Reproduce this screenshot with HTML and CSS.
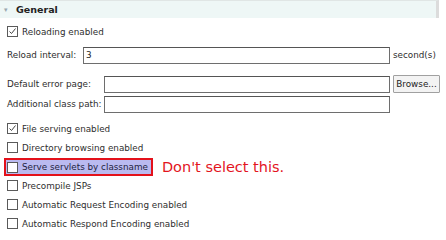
FILE: index.html
```html
<!DOCTYPE html>
<html>
<head>
    <title>General</title>
    <link rel="stylesheet" href="styles.css">
</head>
<body>
    <div class="section">
        <div class="section-head"><span class="twisty">&#9662;</span>General</div>

        <div class="section-body">
            <div class="check first">
                <span class="box"><svg viewBox="0 0 9 9" width="9" height="9"><polyline points="1.5,4.5 3.5,6.5 7.5,1.5" fill="none" stroke="#444" stroke-width="1"/></svg></span>
                Reloading enabled
            </div>

            <div class="row interval">
                <span class="lbl">Reload interval:</span>
                <input class="text" type="text" value="3">
                <span class="unit">second(s)</span>
            </div>

            <div class="paths">
                <span class="lbl">Default error page:</span>
                <input class="text" type="text">
                <button class="browse">Browse...</button>

                <span class="lbl">Additional class path:</span>
                <input class="text" type="text">
                <span></span>
            </div>

            <div class="check gap">
                <span class="box"><svg viewBox="0 0 9 9" width="9" height="9"><polyline points="1.5,4.5 3.5,6.5 7.5,1.5" fill="none" stroke="#444" stroke-width="1"/></svg></span>
                File serving enabled
            </div>
            <div class="check">
                <span class="box"></span>
                Directory browsing enabled
            </div>
            <div class="check marked">
                <span class="hl">
                    <span class="box"></span>
                    Serve servlets by classname
                </span>
                <span class="warn">Don't select this.</span>
            </div>
            <div class="check">
                <span class="box"></span>
                Precompile JSPs
            </div>
            <div class="check">
                <span class="box"></span>
                Automatic Request Encoding enabled
            </div>
            <div class="check">
                <span class="box"></span>
                Automatic Respond Encoding enabled
            </div>
        </div>
    </div>
</body>
</html>
```

FILE: styles.css
```css
body {
    margin: 0;
    width: 446px;
    height: 240px;
    overflow: hidden;
    background: #fff;
    color: #2e2e2e;
    font-family: "DejaVu Sans", sans-serif;
    font-size: 8.8px;
}
.section-head {
    width: 439px;
    height: 18px;
    box-sizing: border-box;
    display: flex;
    align-items: center;
    padding-left: 4px;
    background: #eef7f6;
    border-top: 1px solid #e0e6e5;
    border-right: 3px solid #dcdcdc;
    font-weight: bold;
    font-size: 9.5px;
    color: #222;
}
.twisty {
    font-size: 7px;
    color: #9aa8b0;
    width: 12px;
    font-weight: normal;
}
.check {
    display: flex;
    align-items: center;
    height: 19px;
    padding-left: 7px;
}
.check.first {
    margin-top: 4px;
}
.check.gap {
    margin-top: 5px;
}
.box {
    width: 9px;
    height: 9px;
    border: 1px solid #5a5a5a;
    background: #fff;
    margin-right: 4px;
    display: flex;
    flex: none;
}
.row {
    display: flex;
    align-items: center;
    height: 20px;
    margin-top: 4px;
    padding-left: 7px;
}
.interval .lbl {
    width: 76px;
}
.lbl {
    white-space: nowrap;
}
.text {
    box-sizing: border-box;
    height: 17px;
    margin: 0;
    padding: 0 2px;
    border: 1px solid #6e6e6e;
    border-top-color: #555;
    font-family: "DejaVu Sans", sans-serif;
    font-size: 8.8px;
    color: #222;
    outline: none;
}
.interval .text {
    width: 307px;
}
.unit {
    margin-left: 3px;
}
.paths {
    display: grid;
    grid-template-columns: 94px 286px 47px;
    grid-template-rows: 20px 20px;
    column-gap: 3px;
    align-items: center;
    margin-top: 9px;
    padding-left: 7px;
}
.browse {
    height: 18px;
    margin: 0;
    padding: 0;
    background: #f3f3f3;
    border: 1px solid #a0a0a0;
    border-radius: 1px;
    font-family: "DejaVu Sans", sans-serif;
    font-size: 8.8px;
    color: #222;
}
.marked {
    padding-left: 4px;
}
.hl {
    display: flex;
    align-items: center;
    height: 18px;
    box-sizing: border-box;
    padding: 0 3px 0 1px;
    margin-top: 1px;
    border: 2px solid #e3111b;
    background: #babaf0;
    color: #1e1e40;
}
.warn {
    margin-left: 9px;
    color: #e3141e;
    font-size: 14.5px;
}
```
